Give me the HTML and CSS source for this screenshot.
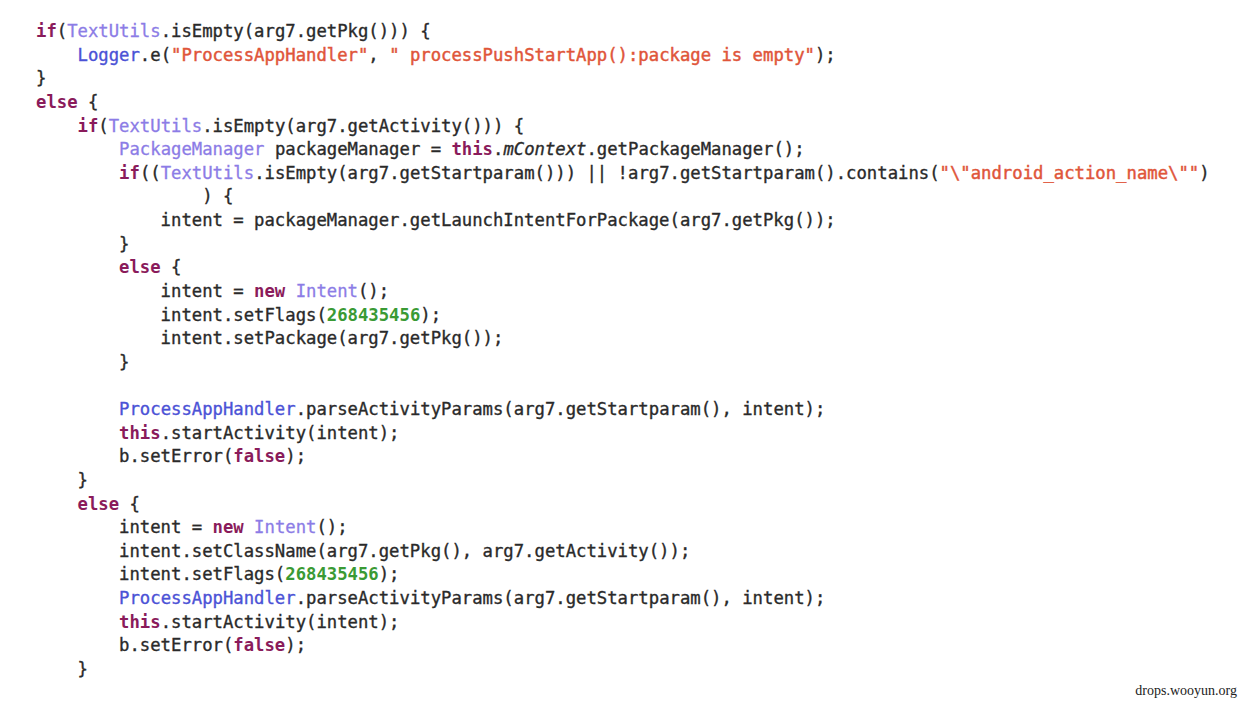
FILE: index.html
```html
<!DOCTYPE html>
<html>
<head>
<meta charset="utf-8">
<link rel="stylesheet" href="styles.css">
</head>
<body>
<div class="page">
<pre class="code"><span class="kw">if</span>(<span class="cls">TextUtils</span>.isEmpty(arg7.getPkg())) {
    <span class="cl2">Logger</span>.e(<span class="str">"ProcessAppHandler"</span>, <span class="str">" processPushStartApp():package is empty"</span>);
}
<span class="kw">else</span> {
    <span class="kw">if</span>(<span class="cls">TextUtils</span>.isEmpty(arg7.getActivity())) {
        <span class="cls">PackageManager</span> packageManager = <span class="kw">this</span>.<span class="it">mContext</span>.getPackageManager();
        <span class="kw">if</span>((<span class="cls">TextUtils</span>.isEmpty(arg7.getStartparam())) || !arg7.getStartparam().contains(<span class="str">"\"android_action_name\""</span>)
                ) {
            intent = packageManager.getLaunchIntentForPackage(arg7.getPkg());
        }
        <span class="kw">else</span> {
            intent = <span class="kw">new</span> <span class="cls">Intent</span>();
            intent.setFlags(<span class="num">268435456</span>);
            intent.setPackage(arg7.getPkg());
        }

        <span class="cl2">ProcessAppHandler</span>.parseActivityParams(arg7.getStartparam(), intent);
        <span class="kw">this</span>.startActivity(intent);
        b.setError(<span class="kw">false</span>);
    }
    <span class="kw">else</span> {
        intent = <span class="kw">new</span> <span class="cls">Intent</span>();
        intent.setClassName(arg7.getPkg(), arg7.getActivity());
        intent.setFlags(<span class="num">268435456</span>);
        <span class="cl2">ProcessAppHandler</span>.parseActivityParams(arg7.getStartparam(), intent);
        <span class="kw">this</span>.startActivity(intent);
        b.setError(<span class="kw">false</span>);
    }</pre>
<div class="mark">drops.wooyun.org</div>
</div>
</body>
</html>
```

FILE: styles.css
```css
html, body {
  margin: 0;
  padding: 0;
  background: #ffffff;
}
.page {
  width: 1240px;
  height: 708px;
  box-sizing: border-box;
  padding: 20px 0 0 36px;
  display: flex;
  flex-direction: column;
}
.code {
  margin: 0;
  font-family: "DejaVu Sans Mono", "Liberation Mono", monospace;
  font-size: 17.25px;
  line-height: 23.63px;
  color: #2a2a2a;
  letter-spacing: 0;
  -webkit-text-stroke: 0.35px #2a2a2a;
}
.kw {
  color: #8a1b5b;
  font-weight: bold;
  -webkit-text-stroke: 0;
}
.cls {
  color: #8c7ce6;
  -webkit-text-stroke: 0.3px #8c7ce6;
}
.cl2 {
  color: #4b52d6;
  -webkit-text-stroke: 0.35px #4b52d6;
}
.str {
  color: #e0553a;
  -webkit-text-stroke: 0.45px #e0553a;
}
.num {
  color: #3a9a34;
  font-weight: bold;
  -webkit-text-stroke: 0;
}
.it {
  font-style: italic;
}
.mark {
  align-self: flex-end;
  margin-top: 1px;
  margin-right: 3px;
  font-family: "Liberation Serif", "DejaVu Serif", serif;
  font-size: 14px;
  color: #222;
}
```
